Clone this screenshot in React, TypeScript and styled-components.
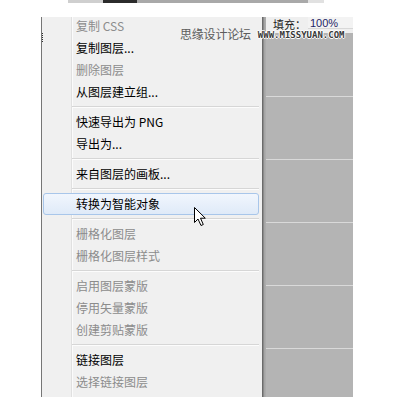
import React from 'react';
import styled, { createGlobalStyle } from 'styled-components';

const Global = createGlobalStyle`
  html, body { margin: 0; padding: 0; background: #fff; }
  body { font-family: "Noto Sans CJK SC", "Noto Sans", sans-serif; }
`;

const Page = styled.div`
  position: relative;
  width: 403px;
  height: 404px;
  overflow: hidden;
  background: #fff;
`;

const TopStrip = styled.div`
  display: flex;
  height: 3px;
  margin-left: 68px;
`;

const StripPart = styled.div<{ $w: number; $c: string }>`
  width: ${(p) => p.$w}px;
  background: ${(p) => p.$c};
`;

const Main = styled.div`
  display: flex;
  height: 380px;
  margin-top: 14px;
  margin-left: 41px;
`;

const Menu = styled.div`
  position: relative;
  width: 220px;
  border-left: 1px solid #767676;
  background: linear-gradient(
    to right,
    #f0f0f0 0,
    #f0f0f0 29px,
    #e0e0e0 29px,
    #e0e0e0 30px,
    #fbfbfb 30px,
    #fbfbfb 31px,
    #f0f0f0 31px
  );
  overflow: hidden;
  font-size: 12px;

  &::before {
    content: '';
    position: absolute;
    left: 0;
    top: 16px;
    width: 1px;
    height: 9px;
    background: repeating-linear-gradient(#333 0 1px, transparent 1px 2px);
  }
`;

const List = styled.div`
  display: flex;
  flex-direction: column;
  margin-top: -2px;
`;

const Item = styled.div<{ $disabled?: boolean; $hot?: boolean }>`
  box-sizing: border-box;
  height: 22px;
  flex-shrink: 0;
  line-height: ${(p) => (p.$hot ? 20 : 22)}px;
  padding-left: ${(p) => (p.$hot ? 32 : 34)}px;
  margin: ${(p) => (p.$hot ? '0 3px 0 1px' : '0')};
  border: ${(p) => (p.$hot ? '1px solid #a8c6ea' : 'none')};
  border-radius: ${(p) => (p.$hot ? 3 : 0)}px;
  background: ${(p) => (p.$hot ? 'linear-gradient(#f1f6fd, #dfeaf8)' : 'transparent')};
  color: ${(p) => (p.$disabled ? '#8c8c8c' : '#000')};
  white-space: nowrap;
`;

const Separator = styled.div`
  height: 8px;
  flex-shrink: 0;
  margin-left: 30px;
  margin-right: 3px;

  &::before {
    content: '';
    display: block;
    margin-top: 3px;
    height: 1px;
    background: #d6d6d6;
    border-bottom: 1px solid #fcfcfc;
  }
`;

const Shadow = styled.div`
  width: 4px;
  background: linear-gradient(to right, #6b6b6b 0, #6b6b6b 1px, #8a8a8a 1px, #8a8a8a 2px, #a2a2a2 2px, #aeaeae 4px);
`;

const Panel = styled.div`
  width: 87px;
  display: flex;
  flex-direction: column;
`;

const PanelHeader = styled.div`
  height: 16px;
  flex-shrink: 0;
  display: flex;
  align-items: flex-start;
  padding-left: 7px;
  background: #efefef;
  overflow: hidden;
  font-size: 11px;
`;

const Label = styled.span`
  line-height: 15px;
  color: #222;
  white-space: nowrap;
`;

const Field = styled.div`
  box-sizing: border-box;
  width: 50px;
  height: 12px;
  margin-left: 2px;
  border-bottom: 1px solid #d8d8d8;
  background: #f3f3f3;
`;

const FieldValue = styled.div`
  line-height: 12px;
  padding-left: 2px;
  color: #1e1e66;
  font-family: "Liberation Sans", sans-serif;
  font-size: 11px;
`;

const PanelBody = styled.div`
  flex: 1;
  min-height: 0;
  overflow: hidden;
  display: flex;
  flex-direction: column;
  background: #b4b4b4;
`;

const PanelRow = styled.div<{ $first?: boolean }>`
  box-sizing: border-box;
  height: 63px;
  flex-shrink: 0;
  border-top: ${(p) => (p.$first ? 'none' : '1px solid #d9d9d9')};
`;

const Watermark = styled.div`
  position: absolute;
  left: 180px;
  top: 26px;
  display: flex;
  align-items: center;
  gap: 7px;
  pointer-events: none;
`;

const WmText = styled.span`
  font-size: 12px;
  line-height: 16px;
  color: #5c5c5c;
  letter-spacing: -0.2px;
`;

const WmUrl = styled.span`
  font-family: "DejaVu Sans Mono", monospace;
  font-weight: bold;
  font-size: 9px;
  line-height: 10px;
  color: #3a3a3a;
  text-shadow: 1px 0 #fff, -1px 0 #fff, 0 1px #fff, 0 -1px #fff;
  margin-top: 1px;
`;

const Cursor = styled.svg`
  position: absolute;
  left: 193px;
  top: 206px;
`;

type Entry = { t: string; d?: boolean; h?: boolean };

const groups: Entry[][] = [
  [{ t: '复制 CSS', d: true }, { t: '复制图层...' }, { t: '删除图层', d: true }, { t: '从图层建立组...' }],
  [{ t: '快速导出为 PNG' }, { t: '导出为...' }],
  [{ t: '来自图层的画板...' }],
  [{ t: '转换为智能对象', h: true }],
  [{ t: '栅格化图层', d: true }, { t: '栅格化图层样式', d: true }],
  [{ t: '启用图层蒙版', d: true }, { t: '停用矢量蒙版', d: true }, { t: '创建剪贴蒙版', d: true }],
  [{ t: '链接图层' }, { t: '选择链接图层', d: true }],
];

export default function App() {
  return (
    <Page>
      <Global />
      <TopStrip>
        <StripPart $w={35} $c="#cfcfcf" />
        <StripPart $w={34} $c="#2b2b2b" />
        <StripPart $w={171} $c="#a9a9a9" />
        <StripPart $w={16} $c="#e1e1e1" />
      </TopStrip>
      <Main>
        <Menu>
          <List>
            {groups.map((g, gi) => (
              <React.Fragment key={gi}>
                {gi > 0 && <Separator />}
                {g.map((e) => (
                  <Item key={e.t} $disabled={e.d} $hot={e.h}>
                    {e.t}
                  </Item>
                ))}
              </React.Fragment>
            ))}
          </List>
        </Menu>
        <Shadow />
        <Panel>
          <PanelHeader>
            <Label>填充：</Label>
            <Field>
              <FieldValue>100%</FieldValue>
            </Field>
          </PanelHeader>
          <PanelBody>
            <PanelRow $first />
            <PanelRow />
            <PanelRow />
            <PanelRow />
            <PanelRow />
            <PanelRow />
          </PanelBody>
        </Panel>
      </Main>
      <Watermark>
        <WmText>思缘设计论坛</WmText>
        <WmUrl>WWW.MISSYUAN.COM</WmUrl>
      </Watermark>
      <Cursor width="14" height="21" viewBox="0 0 14 21">
        <path
          d="M1.5 1.5 L1.5 16.5 L5 13 L8 19.5 L10.3 18.5 L7.5 12.2 L12.3 12.2 Z"
          fill="#fff"
          stroke="#000"
          strokeWidth="1"
          strokeLinejoin="miter"
        />
      </Cursor>
    </Page>
  );
}
